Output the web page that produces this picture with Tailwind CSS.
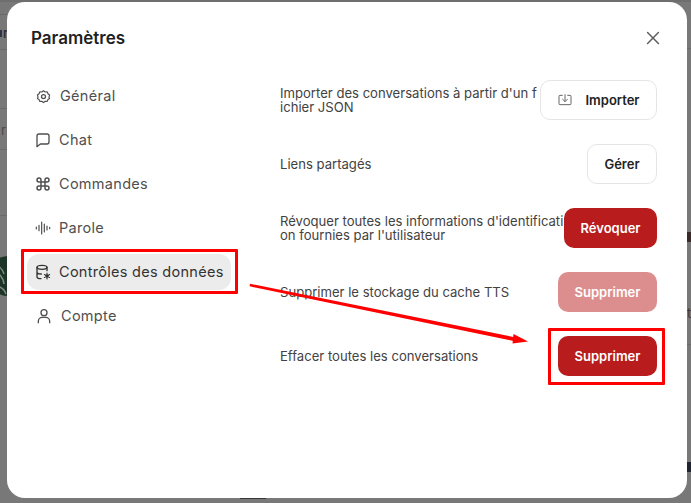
<!DOCTYPE html>
<html lang="fr">
<head>
<meta charset="utf-8">
<script src="https://cdn.jsdelivr.net/npm/@tailwindcss/browser@4"></script>
</head>
<body class="relative w-[691px] h-[503px] overflow-hidden bg-[#787878] font-['Inter',sans-serif]">
<!-- dimmed page behind -->
<div class="absolute left-0 top-0 w-full h-[2px] bg-[#6e6e6e]"></div>
<div class="absolute left-0 top-[14px] w-[7px] h-px bg-[#6a6a6a]"></div>
<div class="absolute left-0 top-[49px] w-[7px] h-px bg-[#6a6a6a]"></div>
<div class="absolute left-0 top-[108px] w-[7px] h-px bg-[#6a6a6a]"></div>
<div class="absolute left-0 top-[149px] w-[7px] h-px bg-[#6a6a6a]"></div>
<div class="absolute left-0 top-[215px] w-[7px] h-px bg-[#6a6a6a]"></div>
<div class="absolute left-0 top-[30px] w-[2px] h-[7px] bg-[#2a3442]"></div>
<div class="absolute left-[3px] top-[25px] text-[13px] leading-4 font-medium text-[#1c2a3a]">r</div>
<div class="absolute left-[1px] top-[122px] text-[13px] leading-4 text-[#4a4a4a]">r</div>
<svg class="absolute left-[-12px] top-[256px] w-[40px] h-[40px]" viewBox="0 0 40 40" fill="#1c3527" stroke="#7d8a80" stroke-width="1.500"><circle cx="20" cy="20" r="20" stroke="none"/><path d="M4 8a14 14 0 0 1 12 10M2 14a16 16 0 0 1 14 14M8 30a12 12 0 0 1 10 8" fill="none"/></svg>
<div class="absolute left-[687px] top-[48px] w-[4px] h-px bg-[#6a6a6a]"></div>
<div class="absolute left-[687px] top-[344px] w-[4px] h-px bg-[#6a6a6a]"></div>
<div class="absolute left-[687px] top-[232px] w-[4px] h-[10px] bg-[#3a2a2a]"></div>
<div class="absolute left-[687px] top-[305px] text-[13px] leading-4 text-[#3a3a3a]">t</div>
<div class="absolute left-[687px] top-[462px] w-[4px] h-[10px] bg-[#1f2430]"></div>
<div class="absolute left-[240px] top-[498px] w-[26px] h-px bg-[#3a3a3a]"></div>

<div class="absolute left-[7px] top-[2px] w-[680px] h-[496px] bg-white rounded-[18px] flex flex-col">
  <header class="flex items-center justify-between px-[24px] pt-[24px] pb-[12px] h-[60px]">
    <h2 class="text-[17px] font-semibold leading-6 text-[#1f1f1f]">Paramètres</h2>
    <svg class="w-[20px] h-[20px] text-[#5d5d5d]" viewBox="0 0 24 24" fill="none" stroke="currentColor" stroke-width="1.800" stroke-linecap="round"><path d="M5.500 5.500l13 13M18.500 5.500l-13 13"/></svg>
  </header>
  <div class="flex flex-1 pt-[12px] pl-[20px] pr-[30px]">
    <nav class="w-[204px] shrink-0 flex flex-col gap-[8px] pt-[4px] text-[14.5px] tracking-[0.02em] text-[#4f4f4f]">
      <div class="h-[36px] flex items-center gap-[9px] pl-[9px]">
        <svg class="w-[15px] h-[15px]" viewBox="0 0 24 24" fill="none" stroke="currentColor" stroke-width="2" stroke-linejoin="round"><path d="M12 2.500l3 2.200 3.500-.3 1.300 3.300 2.700 2.300-1 3.500 1 2.500-2.700 1.800-1.300 3.200-3.500-.3-3 2.300-3-2.300-3.500.3-1.300-3.200-2.700-1.800 1-2.500-1-3.500 2.700-2.300 1.300-3.300 3.500.3z" transform="translate(12 12) scale(.92) translate(-12 -12.500)"/><circle cx="12" cy="12" r="3.200"/></svg>
        <span>Général</span>
      </div>
      <div class="h-[36px] flex items-center gap-[8px] pl-[8px]">
        <svg class="w-[16px] h-[16px]" viewBox="0 0 24 24" fill="none" stroke="currentColor" stroke-width="2" stroke-linejoin="round"><path d="M3 6a3 3 0 0 1 3-3h12a3 3 0 0 1 3 3v9a3 3 0 0 1-3 3H8l-5 4z"/></svg>
        <span>Chat</span>
      </div>
      <div class="h-[36px] flex items-center gap-[8px] pl-[8px]">
        <svg class="w-[16px] h-[16px]" viewBox="0 0 24 24" fill="none" stroke="currentColor" stroke-width="2.200"><path d="M9 9h6v6H9zM9 9V6a3 3 0 1 0-3 3zM15 9h3a3 3 0 1 0-3-3zM9 15H6a3 3 0 1 0 3 3zM15 15v3a3 3 0 1 0 3-3z"/></svg>
        <span>Commandes</span>
      </div>
      <div class="h-[36px] flex items-center gap-[8px] pl-[8px]">
        <svg class="w-[16px] h-[16px]" viewBox="0 0 24 24" fill="none" stroke="currentColor" stroke-width="1.800" stroke-linecap="round"><path d="M2 10.500v3M6 8v8M10 3v18M14 6v12M18 9v6M22 11v2"/></svg>
        <span>Parole</span>
      </div>
      <div class="h-[36px] flex items-center gap-[8px] pl-[8px] rounded-[12px] bg-[#ececec] text-[#333]">
        <svg class="w-[16px] h-[16px]" viewBox="0 0 24 24" fill="none" stroke="currentColor" stroke-width="2" stroke-linecap="round"><ellipse cx="10.500" cy="5" rx="7.500" ry="3"/><path d="M3 5v14c0 1.700 2.500 3 6 3M18 5v5M3 12c0 1.700 2.500 3 6.500 3"/><circle cx="18" cy="18" r="2" fill="currentColor" stroke-width="1"/><path d="M18 13.500v9M14.100 15.700l7.800 4.600M14.100 20.300l7.800-4.600" stroke-width="1.600"/></svg>
        <span>Contrôles des données</span>
      </div>
      <div class="h-[36px] flex items-center gap-[9px] pl-[9px]">
        <svg class="w-[16px] h-[16px]" viewBox="0 0 24 24" fill="none" stroke="currentColor" stroke-width="2" stroke-linecap="round"><circle cx="12" cy="7" r="4.500"/><path d="M3.500 22v-2a6 6 0 0 1 6-6h5a6 6 0 0 1 6 6v2"/></svg>
        <span>Compte</span>
      </div>
    </nav>
    <section class="flex-1 pl-[49px] flex flex-col gap-[24px] pt-[6px] text-[13.1px] leading-[14px] text-[#424242]">
      <div class="h-[40px] flex items-center">
        <p class="flex-1 min-w-0 break-all pr-[3px]">Importer des conversations à partir d'un fichier JSON</p>
        <button class="shrink-0 w-[117px] h-[40px] rounded-[10px] border border-[#e5e5e5] flex items-center justify-center gap-[12px] text-[13px] font-semibold text-[#222]">
          <svg class="w-[16px] h-[16px] text-[#666]" viewBox="0 0 24 24" fill="none" stroke="currentColor" stroke-width="1.500" stroke-linecap="round" stroke-linejoin="round"><path d="M8 5H4.500A1.500 1.500 0 0 0 3 6.500v11A1.500 1.500 0 0 0 4.500 19h15a1.500 1.500 0 0 0 1.500-1.500v-11A1.500 1.500 0 0 0 19.500 5H16M12 4v10M8.500 11l3.500 3.500 3.500-3.500"/></svg>
          <span>Importer</span>
        </button>
      </div>
      <div class="h-[40px] flex items-center">
        <p class="flex-1 min-w-0">Liens partagés</p>
        <button class="shrink-0 w-[70px] h-[40px] rounded-[10px] border border-[#e5e5e5] text-[13px] font-semibold text-[#222]">Gérer</button>
      </div>
      <div class="h-[40px] flex items-center">
        <p class="flex-1 min-w-0 break-all">Révoquer toutes les informations d'identification fournies par l'utilisateur</p>
        <button class="shrink-0 w-[93px] h-[40px] rounded-[10px] bg-[#b91c1c] text-[13px] font-semibold text-white">Révoquer</button>
      </div>
      <div class="h-[40px] flex items-center">
        <p class="flex-1 min-w-0">Supprimer le stockage du cache TTS</p>
        <button class="shrink-0 w-[99px] h-[40px] rounded-[10px] bg-[#dc8e8e] text-[13px] font-semibold text-white">Supprimer</button>
      </div>
      <div class="h-[40px] flex items-center">
        <p class="flex-1 min-w-0">Effacer toutes les conversations</p>
        <button class="shrink-0 w-[99px] h-[40px] rounded-[10px] bg-[#b91c1c] text-[13px] font-semibold text-white">Supprimer</button>
      </div>
    </section>
  </div>
</div>

<!-- annotations -->
<div class="absolute left-[21px] top-[249px] w-[217px] h-[45px] border-[3px] border-[#ff0000] rounded-[1px]"></div>
<div class="absolute left-[548px] top-[328px] w-[117px] h-[57px] border-[3px] border-[#ff0000] rounded-[1px]"></div>
<svg class="absolute left-0 top-0 w-[691px] h-[503px]" viewBox="0 0 691 503" fill="none">
  <path d="M250 283.800L515 337.300L514.500 341.200L249.600 286.300z" fill="#ff0000"/>
  <path d="M528 341.500L513.500 334L512.500 343.500z" fill="#ff0000"/>
</svg>
</body>
</html>
